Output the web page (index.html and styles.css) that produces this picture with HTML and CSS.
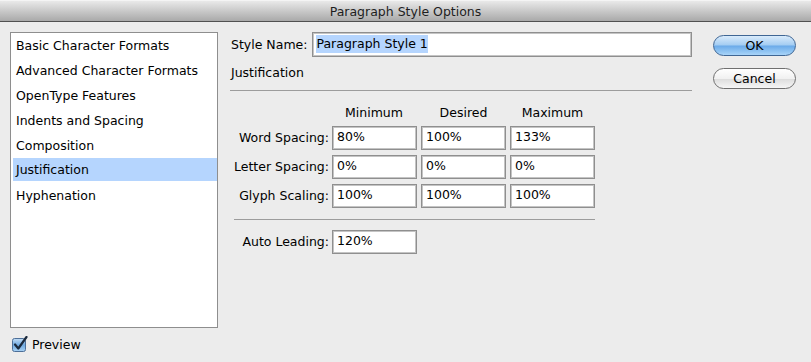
FILE: index.html
```html
<!DOCTYPE html>
<html lang="en">
<head>
  <meta charset="UTF-8">
  <title>Paragraph Style Options</title>
  <link rel="stylesheet" href="styles.css">
</head>
<body>
  <div class="titlebar">Paragraph Style Options</div>

  <div class="dialog">
    <div class="side">
      <ul class="listbox">
        <li>Basic Character Formats</li>
        <li>Advanced Character Formats</li>
        <li>OpenType Features</li>
        <li>Indents and Spacing</li>
        <li>Composition</li>
        <li class="selected">Justification</li>
        <li>Hyphenation</li>
      </ul>
      <label class="preview">
        <span class="checkbox">
          <svg width="18" height="17" viewBox="0 0 18 17">
            <defs>
              <linearGradient id="cb" x1="0" y1="0" x2="0" y2="1">
                <stop offset="0" stop-color="#c4def6"/>
                <stop offset="0.5" stop-color="#6fa9e0"/>
                <stop offset="1" stop-color="#a9d2f4"/>
              </linearGradient>
            </defs>
            <rect x="0.5" y="2.5" width="13" height="13" rx="2" fill="url(#cb)" stroke="#4d6f98"/>
            <path d="M3 8.5 L6.3 12.5 L14.5 1" fill="none" stroke="#1b2a3d" stroke-width="2.2" stroke-linecap="round" stroke-linejoin="round"/>
          </svg>
        </span>
        Preview
      </label>
    </div>

    <div class="main">
      <div class="name-row">
        <span class="name-label">Style Name:</span>
        <div class="field name-field"><span class="sel">Paragraph Style 1</span></div>
      </div>
      <div class="panel-title">Justification</div>
      <hr class="rule">

      <div class="grid">
        <span></span>
        <span class="col-head">Minimum</span>
        <span class="col-head">Desired</span>
        <span class="col-head">Maximum</span>

        <span class="row-label">Word Spacing:</span>
        <div class="field">80%</div>
        <div class="field">100%</div>
        <div class="field">133%</div>

        <span class="row-label">Letter Spacing:</span>
        <div class="field">0%</div>
        <div class="field">0%</div>
        <div class="field">0%</div>

        <span class="row-label">Glyph Scaling:</span>
        <div class="field">100%</div>
        <div class="field">100%</div>
        <div class="field">100%</div>

        <hr class="rule grid-rule">

        <span class="row-label">Auto Leading:</span>
        <div class="field">120%</div>
      </div>
    </div>

    <div class="buttons">
      <button class="btn btn-default">OK</button>
      <button class="btn">Cancel</button>
    </div>
  </div>
</body>
</html>
```
FILE: styles.css
```css
* {
  margin: 0;
  padding: 0;
  box-sizing: border-box;
}

body {
  font-family: "DejaVu Sans", sans-serif;
  font-size: 12.5px;
  color: #000;
  background: #ececec;
  width: 811px;
  height: 362px;
  overflow: hidden;
}

.titlebar {
  height: 22px;
  line-height: 21px;
  text-align: center;
  color: #1e1e1e;
  background: linear-gradient(#e9e9e9, #cfcfcf 40%, #a9a9a9);
  border-bottom: 1px solid #515151;
  border-top: 1px solid #f4f4f4;
}

.dialog {
  display: flex;
  padding: 10px 0 0 10px;
}

/* left column */
.side {
  width: 208px;
}

.listbox {
  list-style: none;
  height: 296px;
  background: #fff;
  border: 1px solid #8e8e8e;
  padding: 0 0 0 2px;
}

.listbox li {
  height: 25px;
  line-height: 25px;
  padding-left: 3px;
  white-space: nowrap;
}

.listbox li.selected {
  background: #b5d5fe;
  height: 23px;
  line-height: 23px;
  margin-bottom: 2px;
}

.preview {
  display: flex;
  align-items: center;
  gap: 2px;
  margin-top: 6px;
  padding-left: 2px;
  height: 20px;
}

.checkbox {
  display: block;
  width: 18px;
  height: 17px;
}

/* middle column */
.main {
  width: 462px;
  margin-left: 12px;
}

.name-row {
  display: flex;
  align-items: center;
  gap: 5px;
  padding-left: 1px;
}

.field {
  height: 24px;
  line-height: 20px;
  background: #fff;
  border: 1px solid #8f8f8f;
  box-shadow: inset 0 0 0 1px #c4c4c4;
  padding: 0 4px;
  white-space: nowrap;
}

.name-field {
  flex: 1;
  height: 25px;
  line-height: 21px;
  padding: 0 3px;
}

.sel {
  background: #b5d5fe;
  display: inline-block;
  line-height: 18px;
}

.panel-title {
  margin-top: 6px;
  padding-left: 1px;
  height: 19px;
  line-height: 19px;
}

.rule {
  border: none;
  border-top: 1px solid #9c9c9c;
  margin-top: 8px;
}

.grid {
  display: grid;
  grid-template-columns: 94px 85px 85px 85px;
  grid-template-rows: 17px repeat(3, 24px) auto 24px;
  column-gap: 4px;
  row-gap: 5px;
  margin: 13px 0 0 4px;
  width: 361px;
}

.col-head {
  text-align: center;
  line-height: 17px;
}

.grid > .col-head:nth-child(2) {
  margin-left: -1px;
}

.row-label {
  text-align: right;
  line-height: 24px;
  white-space: nowrap;
  margin-right: -1px;
}

.grid-rule {
  grid-column: 1 / -1;
  margin: 6px 0 5px;
  height: 1px;
}

/* right column */
.buttons {
  display: flex;
  flex-direction: column;
  gap: 12px;
  margin-left: 21px;
  padding-top: 3px;
}

.btn {
  width: 83px;
  height: 21px;
  border-radius: 11px;
  border: 1px solid #6f6f6f;
  font-family: "DejaVu Sans", sans-serif;
  font-size: 12.5px;
  color: #000;
  background: linear-gradient(#ffffff, #f1f1f1 50%, #dcdcdc 51%, #f6f6f6);
}

.btn-default {
  border-color: #3f6694;
  background: linear-gradient(#d9ebfb, #a3ccf2 48%, #6aaae9 52%, #a8d4f8);
}
```
